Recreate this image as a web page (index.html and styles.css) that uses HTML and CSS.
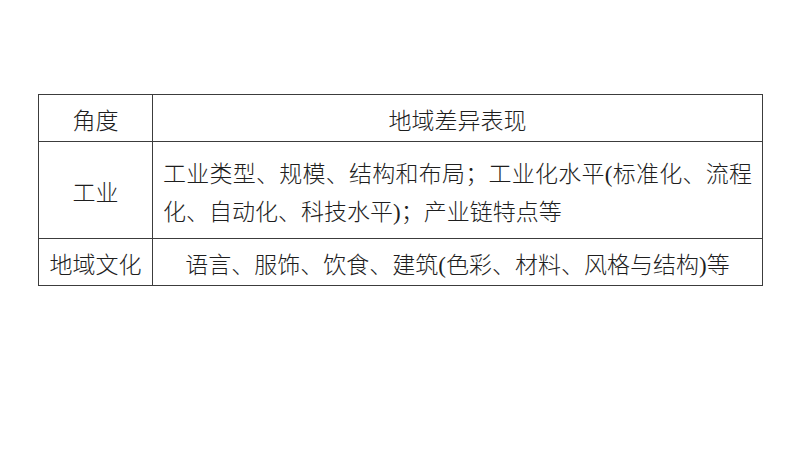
FILE: index.html
```html
<!DOCTYPE html>
<html lang="zh-CN">
<head>
<meta charset="utf-8">
<title>地域差异表现</title>
<link rel="stylesheet" href="styles.css">
</head>
<body>
<table class="diff-table">
  <colgroup>
    <col class="col-angle">
    <col class="col-detail">
  </colgroup>
  <tr class="row-head">
    <td class="cell-center">角度</td>
    <td class="cell-center">地域差异表现</td>
  </tr>
  <tr class="row-industry">
    <td class="cell-center">工业</td>
    <td class="cell-justify">工业类型、规模、结构和布局；工业化水平(标准化、流程化、自动化、科技水平)；产业链特点等</td>
  </tr>
  <tr class="row-culture">
    <td class="cell-center">地域文化</td>
    <td class="cell-center">语言、服饰、饮食、建筑(色彩、材料、风格与结构)等</td>
  </tr>
</table>
</body>
</html>
```

FILE: styles.css
```css
html, body {
  margin: 0;
  padding: 0;
  background: #ffffff;
}

body {
  padding: 94px 0 0 38px;
  font-family: "Liberation Serif", "Noto Sans CJK SC", serif;
  font-weight: 300;
  color: #1e1e1e;
}

.diff-table {
  border-collapse: collapse;
  table-layout: fixed;
  width: 724px;
  font-size: 23px;
}

.col-angle { width: 114px; }
.col-detail { width: 610px; }

.diff-table td {
  border: 1.5px solid #3c3c3c;
  vertical-align: middle;
  padding: 8px 10px 0 10px;
  line-height: 38px;
}

.row-head td { height: 38px; }
.row-industry td { height: 88px; }
.row-culture td { height: 38px; }

.cell-center { text-align: center; }

.cell-justify {
  text-align: justify;
}
```
